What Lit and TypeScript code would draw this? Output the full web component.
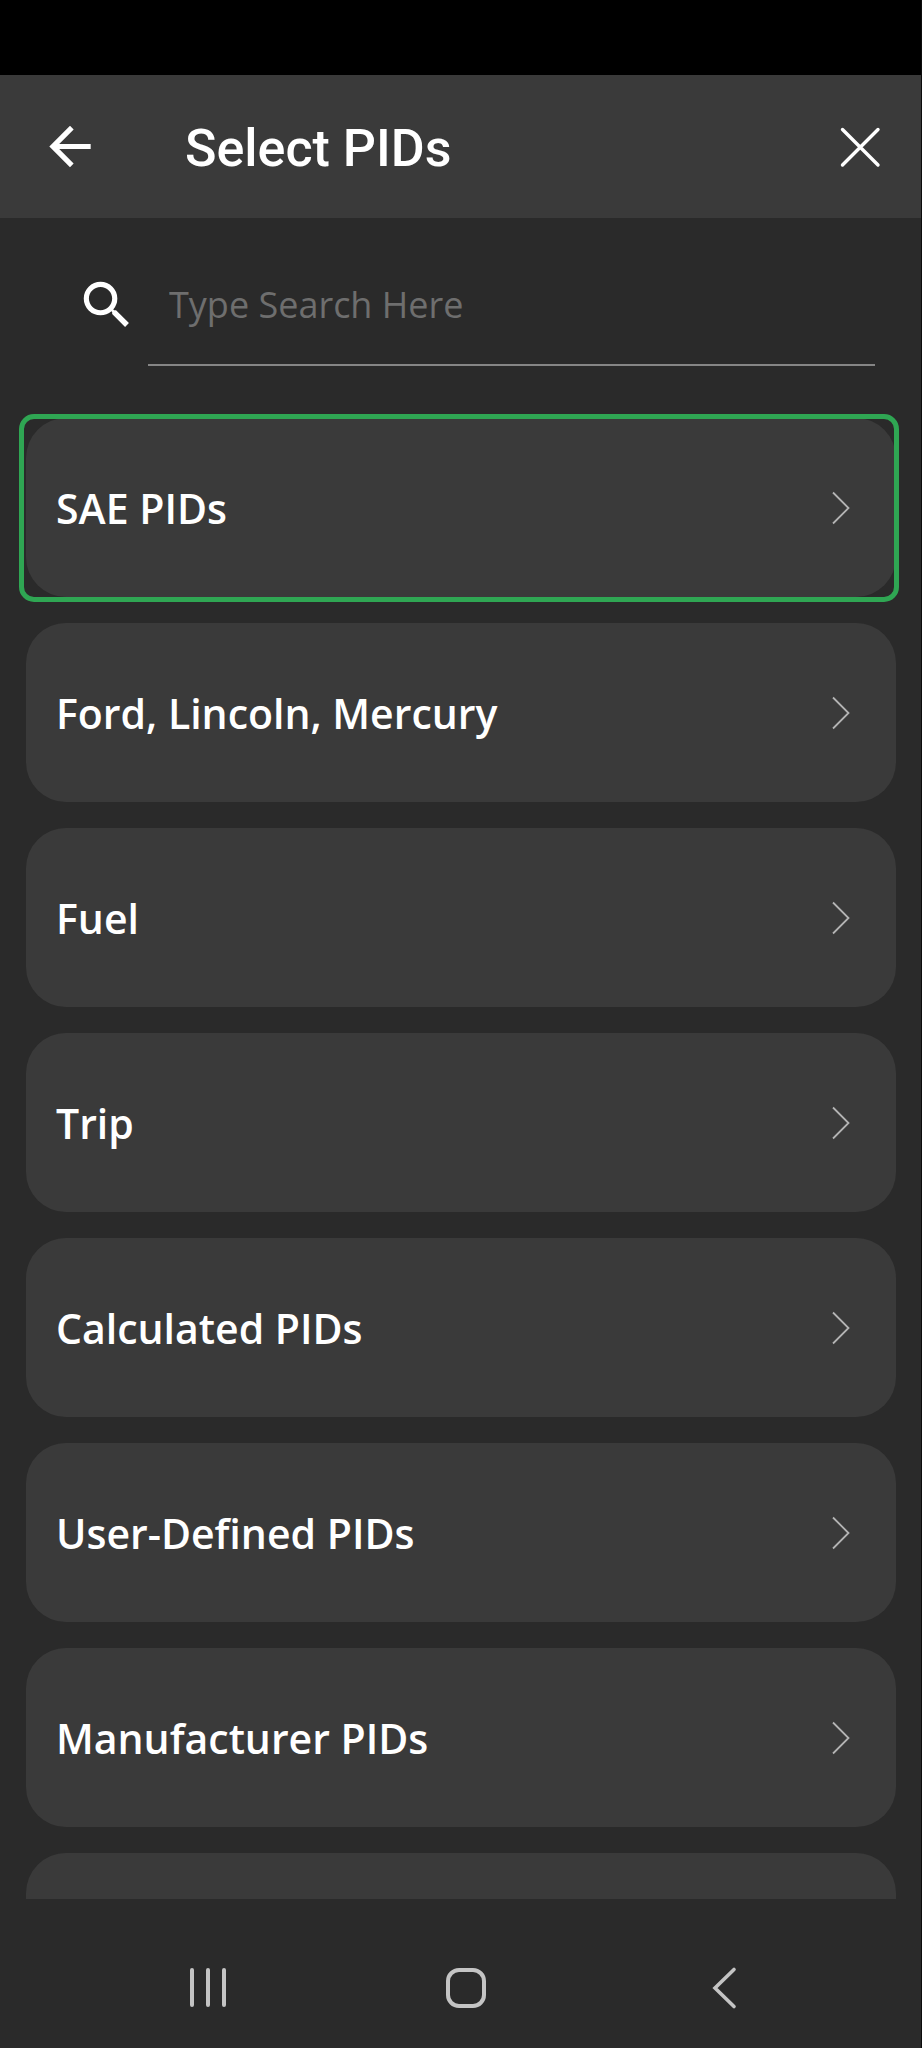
import { LitElement, html, css } from "lit";
import { customElement, property, state } from "lit/decorators.js";
import { classMap } from "lit/directives/class-map.js";

@customElement("pid-card")
class PidCard extends LitElement {
  @property() label = "";
  @property({ type: Boolean }) selected = false;

  static styles = css`
    :host {
      display: block;
      flex: none;
    }
    .card {
      position: relative;
      display: flex;
      align-items: center;
      justify-content: space-between;
      width: 100%;
      height: 179px;
      box-sizing: border-box;
      margin: 0;
      padding: 0 44px 0 30px;
      border: 0;
      border-radius: 40px;
      background: #3a3a3a;
      color: #fff;
      font: 600 41px/56px "Open Sans", "Noto Sans", sans-serif;
      text-align: left;
      cursor: pointer;
    }
    .card:focus {
      outline: none;
    }
    .selected::after {
      content: "";
      position: absolute;
      inset: -4px -3px -5px -7px;
      border: 5px solid #2fa653;
      border-radius: 15px;
    }
    .chevron {
      flex: none;
      width: 20px;
      height: 36px;
    }
  `;

  render() {
    return html`
      <button type="button" class=${classMap({ card: true, selected: this.selected })}>
        <span>${this.label}</span>
        <svg class="chevron" viewBox="0 0 20 36" fill="none" stroke="#b4b4b4" stroke-width="1.8">
          <path d="M1 2.500 16.500 18 1 33.500" />
        </svg>
      </button>
    `;
  }
}

@customElement("app-root")
class AppRoot extends LitElement {
  @state() private selected = "SAE PIDs";

  private groups = [
    "SAE PIDs",
    "Ford, Lincoln, Mercury",
    "Fuel",
    "Trip",
    "Calculated PIDs",
    "User-Defined PIDs",
    "Manufacturer PIDs",
    "",
  ];

  static styles = css`
    :host {
      display: flex;
      flex-direction: column;
      height: 100vh;
      box-sizing: border-box;
      overflow: hidden;
      border-right: 1px solid #0c0c0c;
      background: #2a2a2a;
      color: #fff;
      font-family: "Open Sans", "Noto Sans", sans-serif;
    }
    .status {
      flex: none;
      height: 75px;
      background: #000;
    }
    .bar {
      flex: none;
      display: flex;
      align-items: center;
      height: 143px;
      padding: 0 30px 0 39px;
      background: #3a3a3a;
    }
    .title {
      flex: 1;
      margin: 0;
      padding: 4px 0 0 84px;
      font: 500 52px/60px Roboto, sans-serif;
    }
    .icon {
      flex: none;
      display: block;
      margin: 0;
      padding: 0;
      border: 0;
      background: none;
      color: inherit;
      cursor: pointer;
    }
    .icon svg,
    .glass {
      display: block;
      flex: none;
    }
    .search {
      flex: none;
      display: flex;
      align-items: flex-start;
      padding: 52px 46px 0 76px;
    }
    .glass {
      width: 62px;
      height: 62px;
      padding: 4px 10px 0 0;
    }
    .field {
      flex: 1;
      min-width: 0;
      height: 96px;
      box-sizing: border-box;
      padding: 0 21px 26px;
      border: 0;
      border-bottom: 2px solid #858585;
      border-radius: 0;
      outline: none;
      background: none;
      color: #fff;
      font: 400 36px/48px "Open Sans", "Noto Sans", sans-serif;
    }
    .field::placeholder {
      color: #6e6e6e;
      opacity: 1;
    }
    .list {
      flex: 1;
      min-height: 0;
      display: flex;
      flex-direction: column;
      gap: 26px;
      padding: 52px 25px 0 26px;
      overflow: hidden;
    }
    .nav {
      flex: none;
      display: grid;
      grid-template-columns: repeat(3, 1fr);
      height: 149px;
      box-sizing: border-box;
      padding: 29px 67px 0 79px;
    }
    .nav .icon {
      display: grid;
      place-items: center;
      color: #c4c4c4;
    }
  `;

  render() {
    return html`
      <div class="status"></div>
      <header class="bar">
        <button type="button" class="icon" aria-label="Back">
          <svg width="62" height="62" viewBox="0 0 24 24" fill="currentColor">
            <path d="M20 10.800H7.830l5.590-5.590L12 3.800l-8 8 8 8 1.410-1.410L7.830 12.800H20v-2z" />
          </svg>
        </button>
        <h1 class="title">Select PIDs</h1>
        <button type="button" class="icon" aria-label="Close">
          <svg width="62" height="62" viewBox="0 0 62 62" fill="none" stroke="currentColor" stroke-width="3.4" stroke-linecap="round">
            <path d="M13.500 13.500 49 49M49 13.500 13.500 49" />
          </svg>
        </button>
      </header>
      <div class="search">
        <svg class="glass" viewBox="0 0 24 24" fill="#fff">
          <path d="M15.5 14h-.79l-.28-.27A6.471 6.471 0 0 0 16 9.5 6.5 6.5 0 1 0 9.5 16c1.61 0 3.09-.59 4.23-1.57l.27.28v.79l5 4.99L20.49 19l-4.99-5zm-6 0C7.01 14 5 11.99 5 9.5S7.01 5 9.5 5 14 7.01 14 9.5 11.99 14 9.5 14z" />
        </svg>
        <input class="field" type="text" aria-label="Search" placeholder="Type Search Here" />
      </div>
      <main class="list">
        ${this.groups.map(
          (g) => html`<pid-card
            .label=${g}
            .selected=${g === this.selected}
            @click=${() => (this.selected = g)}
          ></pid-card>`
        )}
      </main>
      <nav class="nav">
        <button type="button" class="icon" aria-label="Recents">
          <svg width="44" height="44" viewBox="0 0 44 44" fill="none" stroke="currentColor" stroke-width="4" stroke-linecap="round">
            <path d="M6 4v35M22 4v35M38 4v35" />
          </svg>
        </button>
        <button type="button" class="icon" aria-label="Home">
          <svg width="44" height="44" viewBox="0 0 44 44" fill="none" stroke="currentColor" stroke-width="4">
            <rect x="4" y="4" width="36" height="36" rx="11" />
          </svg>
        </button>
        <button type="button" class="icon" aria-label="Back">
          <svg width="44" height="44" viewBox="0 0 44 44" fill="none" stroke="currentColor" stroke-width="3.6" stroke-linecap="round">
            <path d="M31 3.500 12 22 31 40.500" />
          </svg>
        </button>
      </nav>
    `;
  }
}
